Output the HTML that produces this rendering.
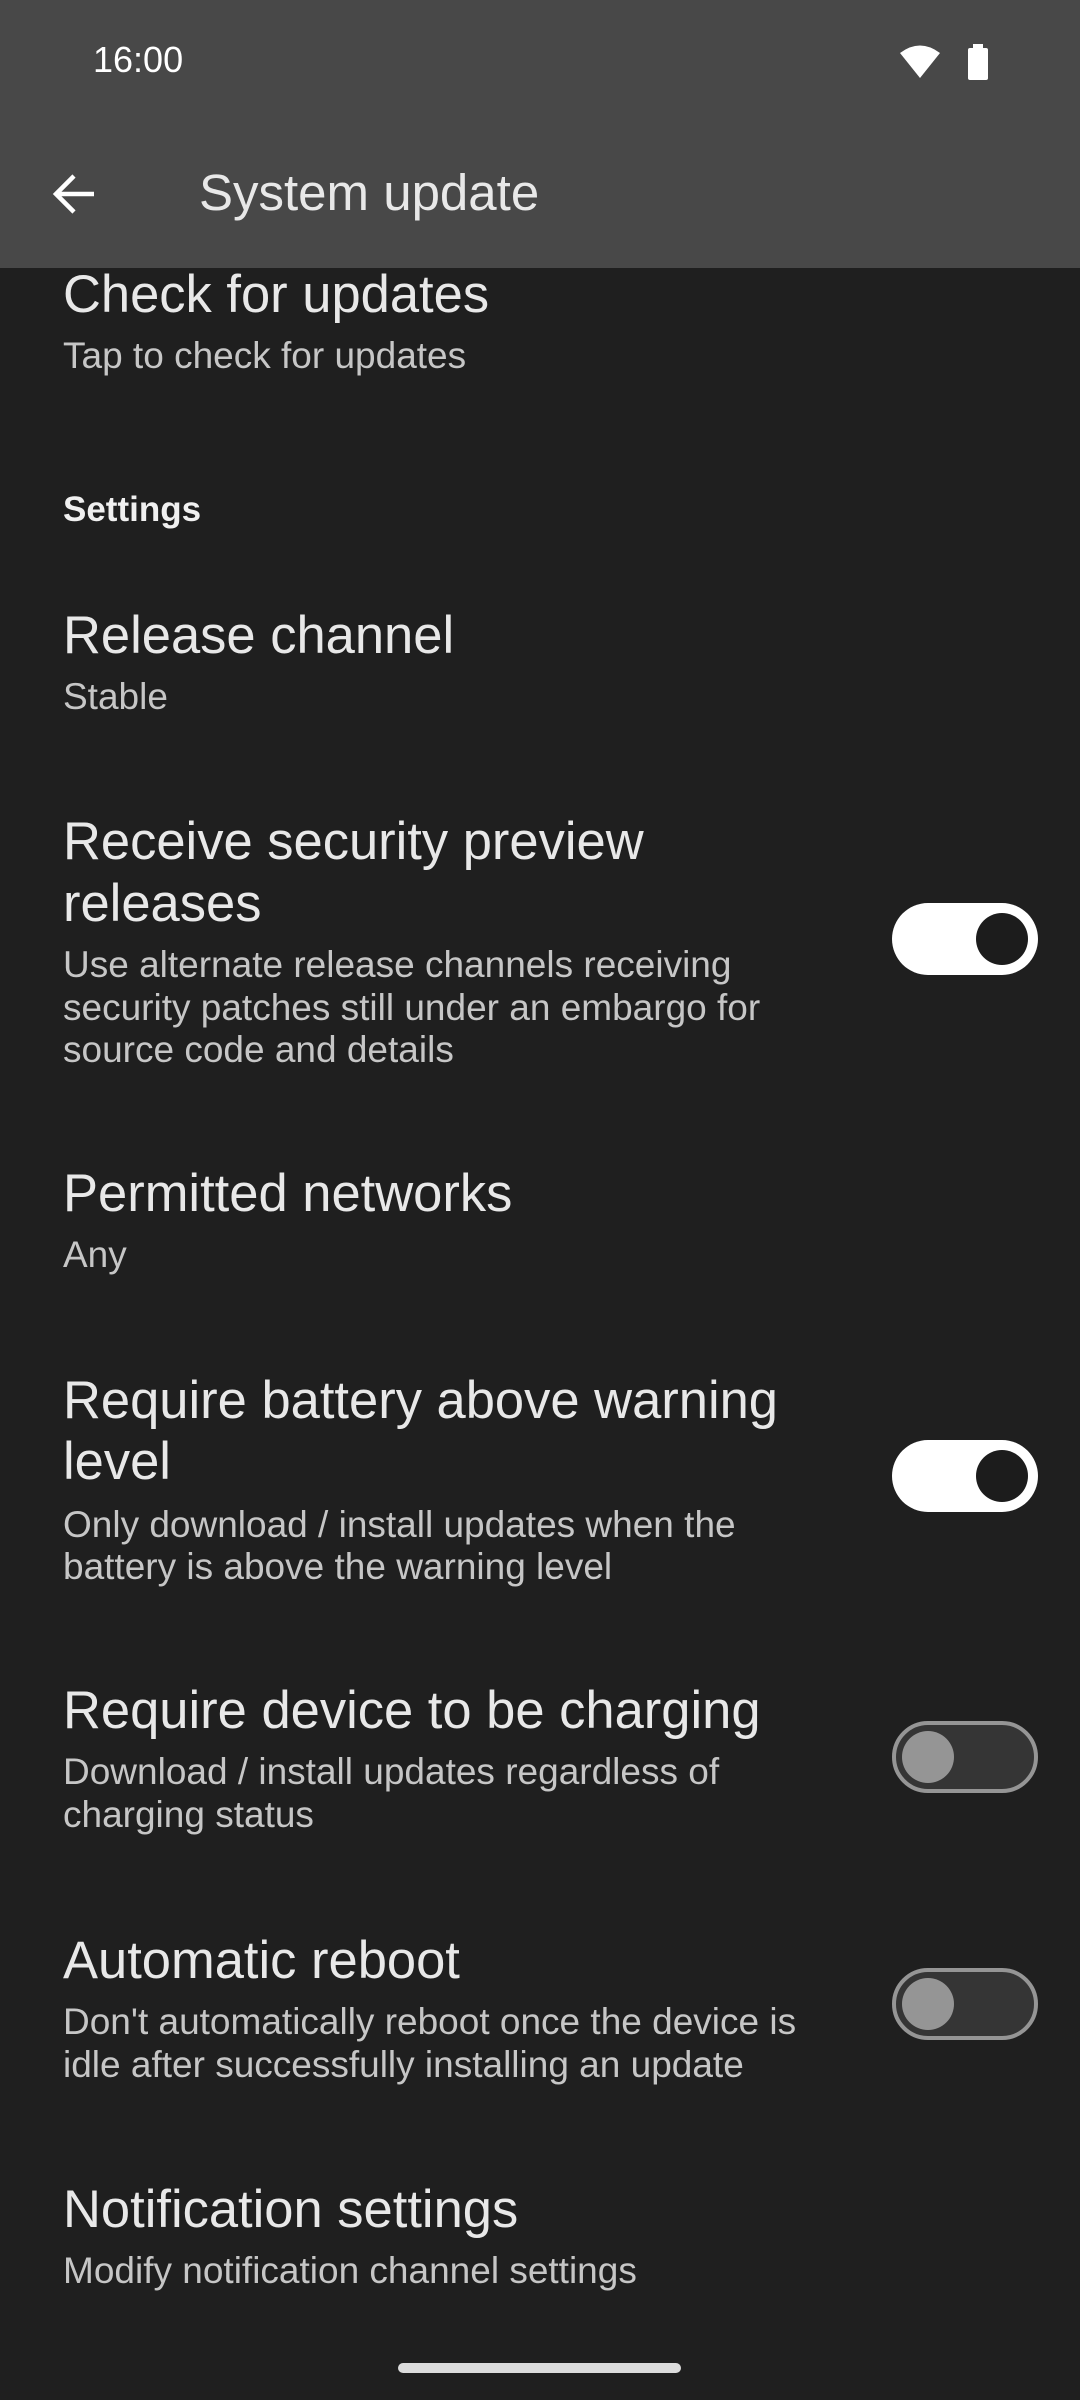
<!DOCTYPE html>
<html><head><meta charset="utf-8"><style>
*{margin:0;padding:0;box-sizing:border-box}
body{width:1080px;height:2400px;background:#1f1f1f;position:relative;overflow:hidden;font-family:"Liberation Sans",sans-serif}
.t{position:absolute;left:63px;font-size:52.5px;line-height:61px;color:#e8e8e8;white-space:nowrap}
.s{position:absolute;left:63px;font-size:37px;line-height:43px;color:#c6c6c6;white-space:nowrap}
.bar{position:absolute;left:0;top:0;width:1080px;height:268px;background:#484848}
.sw{position:absolute;left:892px;width:146px;height:72px;border-radius:36px}
.on{background:#fff}
.on::after{content:"";position:absolute;right:10px;top:10px;width:52px;height:52px;border-radius:50%;background:#1c1c1c}
.off{background:#353535;border:4px solid #959595}
.off::after{content:"";position:absolute;left:6px;top:6px;width:52px;height:52px;border-radius:50%;background:#959595}
</style></head><body>
<div class="t" style="top:264px">Check for updates</div>
<div class="s" style="top:334px">Tap to check for updates</div>
<div style="position:absolute;left:63px;top:488px;font-size:35px;line-height:43px;font-weight:bold;color:#f0f0f0">Settings</div>
<div class="t" style="top:605px">Release channel</div>
<div class="s" style="top:675px">Stable</div>
<div class="t" style="top:811px">Receive security preview</div>
<div class="t" style="top:873px">releases</div>
<div class="s" style="top:943px">Use alternate release channels receiving</div>
<div class="s" style="top:986px">security patches still under an embargo for</div>
<div class="s" style="top:1028px">source code and details</div>
<div class="sw on" style="top:903px"></div>
<div class="t" style="top:1163px">Permitted networks</div>
<div class="s" style="top:1233px">Any</div>
<div class="t" style="top:1370px">Require battery above warning</div>
<div class="t" style="top:1431px">level</div>
<div class="s" style="top:1503px">Only download / install updates when the</div>
<div class="s" style="top:1545px">battery is above the warning level</div>
<div class="sw on" style="top:1440px"></div>
<div class="t" style="top:1680px">Require device to be charging</div>
<div class="s" style="top:1750px">Download / install updates regardless of</div>
<div class="s" style="top:1793px">charging status</div>
<div class="sw off" style="top:1721px"></div>
<div class="t" style="top:1930px">Automatic reboot</div>
<div class="s" style="top:2000px">Don't automatically reboot once the device is</div>
<div class="s" style="top:2043px">idle after successfully installing an update</div>
<div class="sw off" style="top:1968px"></div>
<div class="t" style="top:2179px">Notification settings</div>
<div class="s" style="top:2249px">Modify notification channel settings</div>
<div style="position:absolute;left:398px;top:2363px;width:283px;height:10px;border-radius:5px;background:#dcdcdc"></div>
<div class="bar">
<div style="position:absolute;left:93px;top:39px;font-size:36px;line-height:42px;color:#fff">16:00</div>
<svg style="position:absolute;left:898px;top:44px" width="44" height="36" viewBox="0 0 44 36"><path d="M2 9 Q22 -6 42 9 L22 34 Z" fill="#fff"/></svg>
<svg style="position:absolute;left:966px;top:44px" width="26" height="36" viewBox="0 0 26 36"><rect x="7" y="0" width="10" height="5" fill="#fff"/><rect x="2" y="4" width="20" height="32" rx="2" fill="#fff"/></svg>
<svg style="position:absolute;left:48px;top:168px" width="52" height="52" viewBox="0 0 52 52"><path d="M46 26 H8 M26 8 L8 26 L26 44" stroke="#fff" stroke-width="4.5" fill="none"/></svg>
<div style="position:absolute;left:199px;top:162px;font-size:51px;line-height:62px;color:#e8e8e8">System update</div>
</div>
</body></html>
